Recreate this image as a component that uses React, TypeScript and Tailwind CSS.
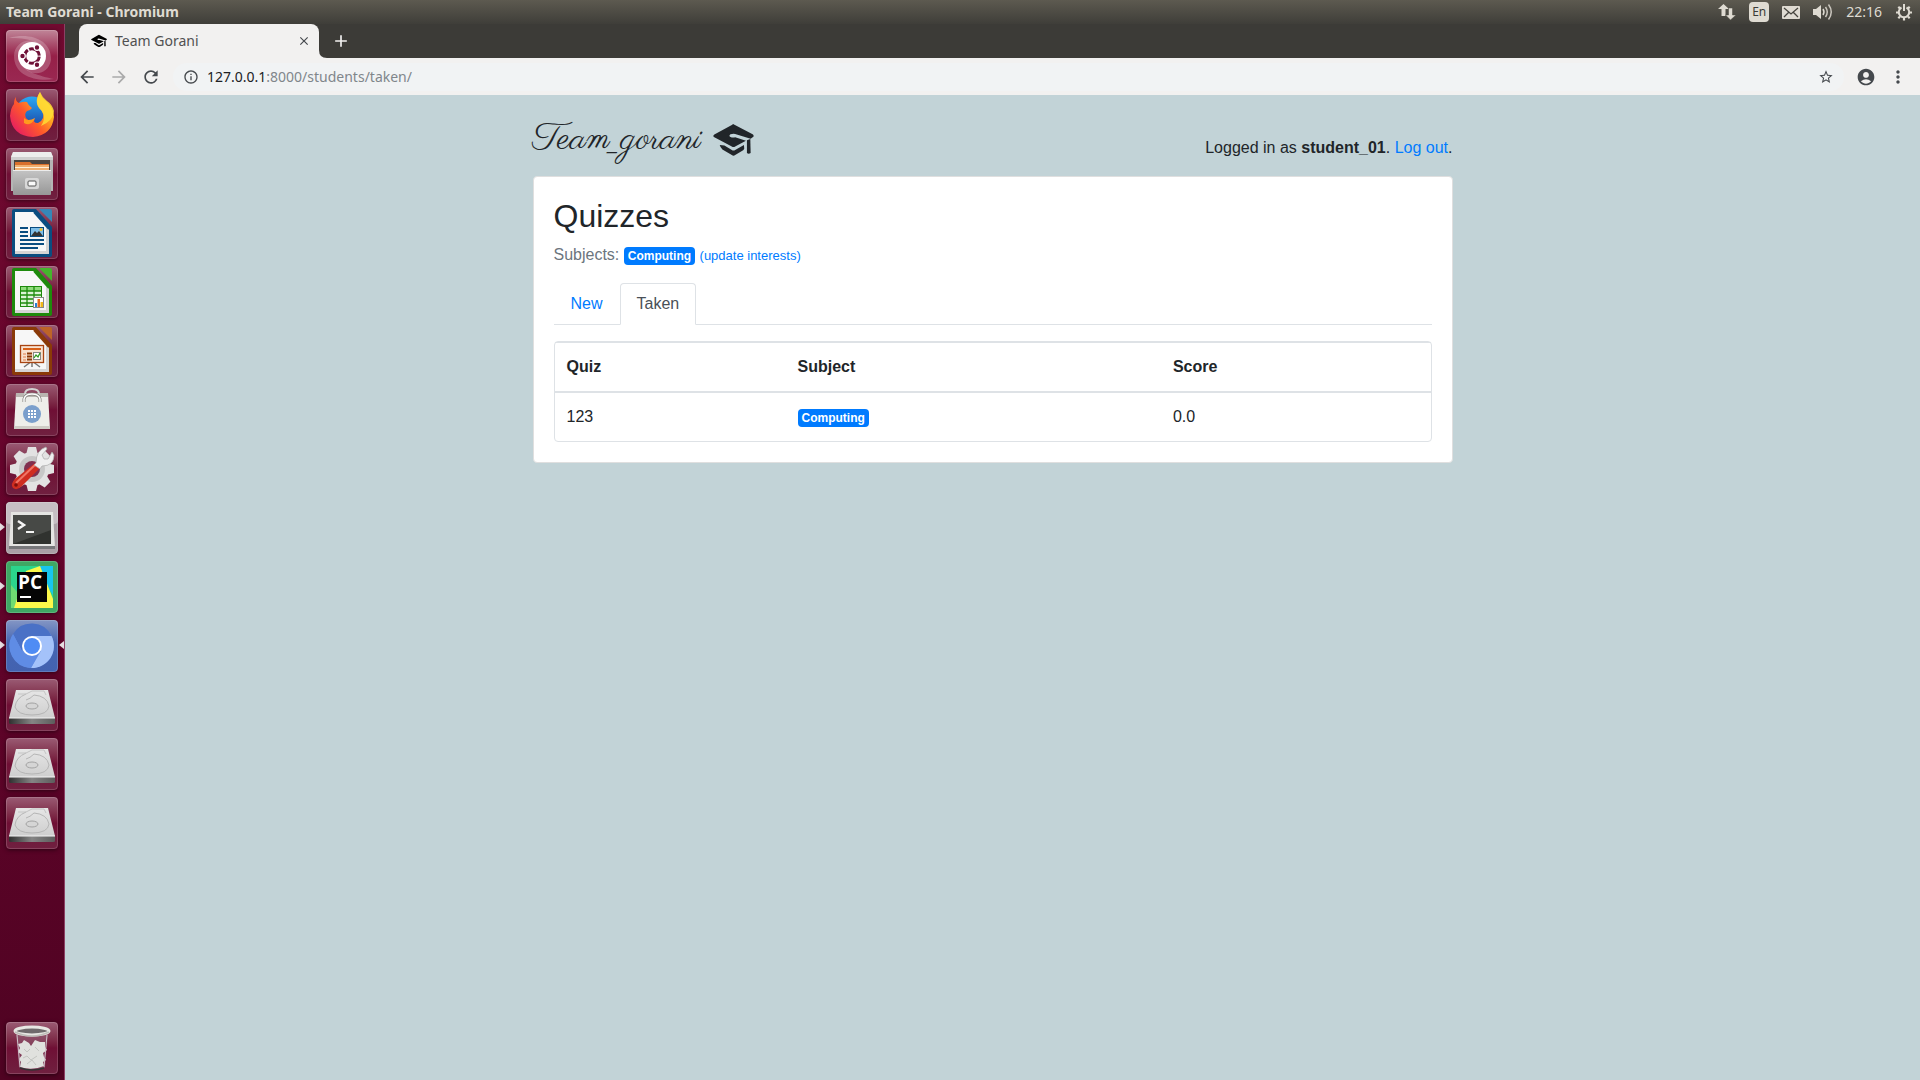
import React from "react";
import {
  MdArrowBack,
  MdArrowForward,
  MdRefresh,
  MdInfoOutline,
  MdStarBorder,
  MdAccountCircle,
  MdMoreVert,
  MdClose,
  MdAdd,
} from "react-icons/md";

function GraduationCap({ className }: { className: string }) {
  return (
    <svg viewBox="0 0 122 94" className={className} fill="currentColor" aria-hidden="true">
      <path d="M61 0 L118 30 Q124 35 118 39 L112 43 L66 29 Q60 27 52 30 Q46 34 52 38 Q58 41 66 39 L98 49 L66 66 Q61 69 56 66 L4 39 Q-2 35 4 31 L56 2 Q61 -1 61 0Z" />
      <path d="M101 48 L111 44 L112 86 Q106 90 101 86Z" />
      <path d="M20 62 L34 63 L56 77 Q61 80 66 77 L92 62 L93 72 Q92 77 86 80 L66 92 Q61 95 56 92 L28 75 Q22 70 20 62Z" />
    </svg>
  );
}

function UbuntuIcon() {
  return (
    <>
      <defs>
        <linearGradient id="dash" x1="0" y1="0" x2="0" y2="1">
          <stop offset="0" stopColor="#c08598" />
          <stop offset="0.5" stopColor="#962048" />
          <stop offset="1" stopColor="#9a2852" />
        </linearGradient>
      </defs>
      <rect width="52" height="52" rx="4" fill="url(#dash)" />
      <path d="M3 8 C24 2 46 10 45 30 C42 48 20 46 16 34 C20 42 38 42 39 26 C38 10 20 8 3 8Z" fill="#fff" opacity="0.22" />
      <path d="M48 49 C30 52 8 46 8 26 C8 12 24 6 34 14 C20 10 12 18 13 28 C16 42 34 46 48 49Z" fill="#fff" opacity="0.2" />
      <circle cx="26" cy="26" r="14" fill="#fff" />
      <circle cx="26" cy="26" r="7.3" fill="none" stroke="#6f1238" strokeWidth="3" strokeDasharray="13.8 1.5" strokeDashoffset="-0.7" />
      <g fill="#6f1238" stroke="#fff" strokeWidth="1.2">
        <circle cx="16.5" cy="26" r="2.8" />
        <circle cx="31" cy="17.5" r="2.8" />
        <circle cx="31" cy="34.8" r="2.8" />
      </g>
    </>
  );
}

function FirefoxIcon() {
  return (
    <>
      <defs>
        <linearGradient id="fox" x1="1" y1="0" x2="0.1" y2="0.8">
          <stop offset="0" stopColor="#fff44f" />
          <stop offset="0.35" stopColor="#ffb020" />
          <stop offset="0.65" stopColor="#ff5a2a" />
          <stop offset="1" stopColor="#e8235c" />
        </linearGradient>
        <linearGradient id="globe" x1="0" y1="0" x2="0" y2="1">
          <stop offset="0" stopColor="#29a9f5" />
          <stop offset="1" stopColor="#1b3fa0" />
        </linearGradient>
      </defs>
      <circle cx="26" cy="24" r="16.5" fill="url(#globe)" />
      <path d="M10 8 Q9 12 13 14 Q18 12 21 13 Q22 16 26 19 Q24 22 21 22 Q18 25 20 29 Q24 34 29 29 Q26 34 32 34 Q40 30 36 22 Q27 14 34 3 Q35 9 41 13 Q48 20 48 28 Q46 46 27 48 Q6 47 4 27 Q5 18 8 15 Q8 10 10 8Z" fill="url(#fox)" />
      <path d="M34 3 Q27 14 35 21 Q41 28 35 37 Q47 32 48 22 Q46 15 41 12 Q36 8 34 3Z" fill="#ffdc35" opacity="0.85" />
      <path d="M18 29 Q22 33 29 29 Q25 38 18 34Z" fill="#ff9a1e" />
    </>
  );
}

function FilesIcon() {
  return (
    <>
      <defs>
        <linearGradient id="drawer" x1="0" y1="0" x2="0" y2="1">
          <stop offset="0" stopColor="#c4c4c4" />
          <stop offset="1" stopColor="#979797" />
        </linearGradient>
      </defs>
      <path d="M7 4 H45 L47 9 V43 H5 V9Z" fill="#b5b5b5" />
      <path d="M7 4 H45 L47 9 H5Z" fill="#ededed" />
      <path d="M5 9 H47 V12 H5Z" fill="#cfcfcf" />
      <rect x="8" y="12" width="36" height="12" fill="#4a4540" />
      <path d="M9 14 H24 L26 16 H43 V24 H9Z" fill="#d9702c" />
      <path d="M9 17 H43 V24 H9Z" fill="#f0b070" />
      <path d="M9 19.5 H43" stroke="#fff0d8" strokeWidth="1" />
      <rect x="7" y="22" width="38" height="25" rx="1" fill="url(#drawer)" />
      <path d="M7 22.5 H45" stroke="#ececec" />
      <rect x="19" y="30" width="14" height="11" rx="2" fill="#d8d8d8" />
      <rect x="22" y="33" width="8" height="5" rx="1" fill="#fafafa" stroke="#555" />
    </>
  );
}

function DocumentShape({ dark, light }: { dark: string; light: string }) {
  return (
    <>
      <path d="M8 2 H30 L46 20 V48 Q46 50 44 50 H8 Q6 50 6 48 V4 Q6 2 8 2Z" fill={dark} />
      <path d="M33 2 H44 Q46 2 46 4 V15Z" fill={light} />
      <path d="M9 5 H28 L43 22 V47 H9Z" fill="#f7f7f7" />
      <path d="M9 44 H43 V47 H9Z M40 20 L43 22 V47 H40Z" fill="#d5d5d5" />
      <path d="M28 5 L43 22" stroke={dark} strokeWidth="2" />
    </>
  );
}

function WriterIcon() {
  return (
    <>
      <DocumentShape dark="#0a4d80" light="#3587b8" />
      <path d="M14 21 H22 M14 25 H22 M14 29 H22 M14 33 H38 M14 37 H38 M14 41 H32" stroke="#0a4d80" strokeWidth="2" />
      <rect x="24.5" y="20.5" width="13" height="9" fill="#80bfe8" stroke="#0a4d80" />
      <path d="M25 29 L29 24 L31 26 L33 24 L37 29Z" fill="#333" />
      <circle cx="35" cy="22.5" r="1.5" fill="#f0c030" />
    </>
  );
}

function CalcIcon() {
  return (
    <>
      <DocumentShape dark="#1e8a0c" light="#45b52c" />
      <rect x="14.5" y="20.5" width="21" height="20" fill="#ddf4d6" stroke="#1e8a0c" />
      <rect x="15" y="21" width="20" height="4" fill="#90dc7c" />
      <path d="M14 25 H36 M14 29 H36 M14 33 H36 M14 37 H36 M21 20 V41 M28 20 V41" stroke="#1e8a0c" strokeWidth="1.3" />
      <rect x="27.5" y="31.5" width="10" height="10" fill="#fff" stroke="#888" />
      <path d="M29 41 V37 H31 V41Z" fill="#2a80d0" />
      <path d="M31.5 41 V33 H34 V41Z" fill="#e86818" />
      <path d="M34.5 41 V36 H37 V41Z" fill="#f0b818" />
    </>
  );
}

function ImpressIcon() {
  return (
    <>
      <DocumentShape dark="#8a3a08" light="#bd6428" />
      <path d="M26 36 L18 42 M26 36 L34 42 M26 36 V42" stroke="#777" strokeWidth="1.5" />
      <rect x="14.5" y="20.5" width="23" height="17" fill="#f8e2d0" stroke="#a84412" strokeWidth="1.3" />
      <path d="M17 24 H35" stroke="#d86018" strokeWidth="2" />
      <path d="M17 29 H20 M17 32 H20 M17 35 H20" stroke="#e8a078" strokeWidth="1.5" />
      <path d="M21 28.5 H26 M21 31.5 H26 M21 34.5 H26" stroke="#8a3a08" strokeWidth="1.8" />
      <rect x="27.5" y="27.5" width="7" height="7" fill="#fff" stroke="#888" />
      <path d="M28 33 L30 30 L32 32 L34 28" stroke="#2d9a20" strokeWidth="1.3" fill="none" />
    </>
  );
}

function SoftwareIcon() {
  return (
    <>
      <path d="M10 9 H42 L44 45 H8Z" fill="#eeeeea" />
      <path d="M10 9 H42 V13 H10Z" fill="#b9b5b0" />
      <path d="M19 13 V10 Q19 5 26 5 Q33 5 33 10 V13" stroke="#d2d2d2" strokeWidth="2" fill="none" />
      <path d="M18 18 V15 Q19 10 26 10 Q33 10 34 15 V18" stroke="#85827d" strokeWidth="3" fill="none" />
      <path d="M18 18 V15 Q19 10 26 10 Q33 10 34 15 V18" stroke="#fff" strokeWidth="1.5" fill="none" />
      <path d="M8 42 H44 V45 H8Z" fill="#cfccc6" />
      <circle cx="26" cy="30" r="9" fill="#7b9fcc" />
      <path d="M22 27 H24 M25 27 H27 M28 27 H30 M22 30 H24 M25 30 H27 M28 30 H30 M22 33 H24 M25 33 H27 M28 33 H30" stroke="#fff" strokeWidth="2" />
    </>
  );
}

const gearTeeth = [0, 45, 90, 135, 180, 225, 270, 315];

function SettingsIcon() {
  return (
    <>
      <g fill="#e2e2e2">
        {gearTeeth.map((a) => (
          <path key={a} d="M20 12 L22 4 H30 L32 12Z" transform={`rotate(${a} 26 26)`} />
        ))}
        <circle cx="26" cy="26" r="17" />
      </g>
      <circle cx="26" cy="26" r="13" fill="#c7c7c7" />
      <circle cx="26" cy="26" r="8" fill="#80304f" />
      <path d="M29 20 L35 24 L16 43 Q11 48 7 45 Q4 41 9 36Z" fill="#cf2d20" />
      <path d="M29 22 L10 40" stroke="#f07565" strokeWidth="2" />
      <circle cx="10" cy="42" r="1.8" fill="#7d100b" />
      <path d="M30 20 Q30 7 40 4 L41 6 L36 12 L38 16 L42 16 L46 9 L48 12 Q48 23 36 23 L34 26 L28 22Z" fill="#efefef" stroke="#aaa" strokeWidth="0.7" />
    </>
  );
}

function TerminalIcon() {
  return (
    <>
      <rect width="52" height="52" rx="4" fill="#aaa0a6" />
      <rect width="52" height="22" rx="4" fill="#c6bec3" />
      <path d="M5 10 H47 L49 46 H3Z" fill="#e5e5e3" />
      <path d="M3 44 H49 V47 H3Z" fill="#77777a" />
      <rect x="7" y="13" width="38" height="29" fill="#30322f" />
      <path d="M7 13 H45 V28 L7 42Z" fill="#474946" />
      <path d="M12 19 L18 23 L12 27" fill="none" stroke="#f4f4f4" strokeWidth="2.5" />
      <path d="M20 30 H28" stroke="#f4f4f4" strokeWidth="2" />
    </>
  );
}

function PyCharmIcon() {
  return (
    <>
      <rect width="52" height="52" rx="4" fill="#3fa864" />
      <rect x="5" y="5" width="42" height="42" fill="#2bd58c" />
      <path d="M5 24 V47 H25Z" fill="#6fdc72" />
      <path d="M33 5 H47 V34 L38 20Z" fill="#18c5ee" />
      <path d="M20 10 L34 5 L40 20 L47 38 V47 L8 47Z" fill="#fcf84a" />
      <rect x="11" y="11" width="30" height="30" fill="#050505" />
      <text x="12" y="28" fontSize="19" fontWeight="700" fill="#fff" fontFamily='"Open Sans", sans-serif'>
        PC
      </text>
      <path d="M14 36 H25" stroke="#fff" strokeWidth="2" />
    </>
  );
}

function ChromiumIcon() {
  return (
    <>
      <defs>
        <linearGradient id="chromiumTile" x1="0" y1="0" x2="0" y2="1">
          <stop offset="0" stopColor="#8496c4" />
          <stop offset="0.45" stopColor="#4565b2" />
          <stop offset="1" stopColor="#4362b0" />
        </linearGradient>
      </defs>
      <rect width="52" height="52" rx="4" fill="url(#chromiumTile)" />
      <circle cx="26" cy="26" r="22" fill="#6991e2" />
      <path d="M7 14 A22 22 0 0 1 45.5 16 H26 L16 31Z" fill="#4a71c6" />
      <path d="M26 16 H45.5 A22 22 0 0 1 25 48 L35 31Z" fill="#a4c2fa" />
      <path d="M7 14 A22 22 0 0 0 25 48 L32 35 L16 31Z" fill="#5f8ce5" />
      <circle cx="26" cy="26" r="10" fill="#fff" />
      <circle cx="26" cy="26" r="8" fill="#4f8cf4" />
    </>
  );
}

function DriveIcon() {
  return (
    <>
      <defs>
        <linearGradient id="disk" x1="0" y1="0" x2="0" y2="1">
          <stop offset="0" stopColor="#e6e6e6" />
          <stop offset="1" stopColor="#cecece" />
        </linearGradient>
        <linearGradient id="diskEdge" x1="0" y1="0" x2="1" y2="0">
          <stop offset="0" stopColor="#303030" />
          <stop offset="0.5" stopColor="#858585" />
          <stop offset="1" stopColor="#5c5c5c" />
        </linearGradient>
      </defs>
      <path d="M10 11 H42 L49 39 H3Z" fill="url(#disk)" />
      <path d="M3 39 H49 V44 Q49 45 47 45 H5 Q3 45 3 44Z" fill="url(#diskEdge)" />
      <path d="M3 39 H49" stroke="#f5f5f5" />
      <path d="M20 15 Q10 19 9 28 Q12 36 26 36 Q42 36 43 27 Q41 17 28 16 Q24 20 20 21" fill="none" stroke="#b5b5b5" />
      <path d="M12 15 H20 L26 12 H38 L40 16" fill="none" stroke="#c4c4c4" />
      <ellipse cx="26" cy="27" rx="6" ry="3" fill="#d5d5d5" stroke="#a2a2a2" />
    </>
  );
}

function TrashIcon() {
  return (
    <>
      <path d="M10 11 L13 46 Q26 50 39 46 L42 11Z" fill="#a590a0" opacity="0.3" />
      <path d="M12 22 L16 21 L18 18 L23 21 L25 24 L29 18 L34 20 L39 20 L39 25 L41 28 L37 31 L38 35 L40 38 L37 40 L38 44 Q26 49 14 45 L15 40 L13 37 L16 33 L12 30 L14 26Z" fill="#e0e1de" />
      <path d="M18 27 L21 30 L24 27 M29 25 L33 29 M17 36 L21 34 L25 38 L31 34 M21 42 L26 38 L30 43" stroke="#c3c5c1" fill="none" />
      <path d="M11 13 L14 45 M41 13 L38 45" stroke="#d0c2ca" strokeWidth="1" />
      <path d="M14 46 Q26 50 38 46" stroke="#333" fill="none" strokeWidth="1.5" />
      <ellipse cx="26" cy="9" rx="17" ry="4" fill="#6f6a6c" stroke="#e7e7e3" strokeWidth="3" />
      <path d="M9 10 Q26 18 43 10" stroke="#bdbdb8" strokeWidth="1.5" fill="none" />
    </>
  );
}

type LauncherEntry = { label: string; icon: React.ReactNode; running?: boolean; focused?: boolean };

const launcher: LauncherEntry[] = [
  { label: "Search your computer", icon: <UbuntuIcon /> },
  { label: "Firefox", icon: <FirefoxIcon /> },
  { label: "Files", icon: <FilesIcon /> },
  { label: "Writer", icon: <WriterIcon /> },
  { label: "Calc", icon: <CalcIcon /> },
  { label: "Impress", icon: <ImpressIcon /> },
  { label: "Software", icon: <SoftwareIcon /> },
  { label: "System Settings", icon: <SettingsIcon /> },
  { label: "Terminal", icon: <TerminalIcon />, running: true },
  { label: "PyCharm", icon: <PyCharmIcon />, running: true },
  { label: "Chromium", icon: <ChromiumIcon />, running: true, focused: true },
  { label: "Volume 1", icon: <DriveIcon /> },
  { label: "Volume 2", icon: <DriveIcon /> },
  { label: "Volume 3", icon: <DriveIcon /> },
];

function LauncherButton({ label, icon, running, focused }: LauncherEntry) {
  return (
    <div className="relative flex w-full justify-center">
      {running && (
        <svg viewBox="0 0 5 8" className="absolute top-[21px] left-0 h-2 w-[5px]" fill="#e6dde1" aria-hidden="true">
          <path d="M0 0 L5 4 L0 8Z" />
        </svg>
      )}
      <button
        type="button"
        aria-label={label}
        className="relative size-[52px] overflow-hidden rounded bg-linear-to-b from-[#9a5b74] via-[#6f0f35] via-50% to-[#702040] shadow-[0_1px_4px_rgba(0,0,0,0.5)]"
      >
        <svg viewBox="0 0 52 52" className="block size-full" aria-hidden="true">
          {icon}
          <rect x="0.5" y="0.5" width="51" height="51" rx="3.5" fill="none" stroke="#fff" strokeOpacity="0.16" />
        </svg>
      </button>
      {focused && (
        <svg viewBox="0 0 5 8" className="absolute top-[21px] right-0 h-2 w-[5px]" fill="#e6dde1" aria-hidden="true">
          <path d="M5 0 L0 4 L5 8Z" />
        </svg>
      )}
    </div>
  );
}

function Launcher() {
  return (
    <nav
      aria-label="Launcher"
      className="flex w-[65px] shrink-0 flex-col justify-between border-r border-[#8c4064] bg-linear-to-b from-[#710a30] via-[#64042b] via-50% to-[#4f0322] pt-1.5 pb-1.5"
    >
      <div className="flex flex-col gap-[7px]">
        {launcher.map((e) => (
          <LauncherButton key={e.label} {...e} />
        ))}
      </div>
      <LauncherButton label="Trash" icon={<TrashIcon />} />
    </nav>
  );
}

function SystemBar() {
  return (
    <header className="flex h-6 shrink-0 items-center justify-between bg-linear-to-b from-[#5d5a50] to-[#3f3e39] pr-[7px] pl-1.5 text-[#dfdbd2]">
      <span className="text-sm leading-6 font-bold">Team Gorani - Chromium</span>
      <div className="flex items-center gap-[13px]">
        <svg viewBox="0 0 18 16" className="h-4 w-[18px]" fill="currentColor" aria-hidden="true">
          <path d="M5.500 0 L11 5 H7.500 V12 H3.500 V5 H0Z" />
          <path d="M12.500 16 L7.500 11 H10.500 V4 H14.500 V11 H18Z" stroke="#4b4941" strokeWidth="0.5" />
        </svg>
        <span className="flex h-5 w-5 items-center justify-center rounded-sm bg-[#dfdbd2] text-xs leading-5 text-[#3c3b37]">En</span>
        <svg viewBox="0 0 18 13" className="h-[13px] w-[18px]" aria-hidden="true">
          <rect width="18" height="13" rx="1" fill="#dfdbd2" />
          <path d="M2 2 L9 8 L16 2 M2 11 L6.500 6.500 M16 11 L11.500 6.500" stroke="#46443e" strokeWidth="1.3" fill="none" />
        </svg>
        <svg viewBox="0 0 20 18" className="h-[18px] w-5" fill="none" stroke="currentColor" strokeWidth="1.5" aria-hidden="true">
          <path d="M0 6 H3 L8 2 V16 L3 12 H0Z" fill="currentColor" stroke="none" />
          <path d="M10 6 Q12 9 10 12" />
          <path d="M12.500 4 Q16 9 12.500 14" opacity="0.85" />
          <path d="M15.500 1.500 Q21 9 15.500 16.500" opacity="0.85" />
        </svg>
        <time className="text-sm leading-6">22:16</time>
        <svg viewBox="0 0 18 18" className="size-[18px]" fill="none" stroke="currentColor" aria-hidden="true">
          <path d="M6.500 4.500 A5.200 5.200 0 1 0 11.500 4.500" strokeWidth="2" />
          <path d="M9 1 V8" strokeWidth="2" />
          <path d="M1 9.500 H4 M14 9.500 H17 M9 14 V17.500 M3.300 3.800 L5 5.500 M14.700 3.800 L13 5.500 M3.300 15.200 L5 13.500 M14.700 15.200 L13 13.500" strokeWidth="2.2" />
        </svg>
      </div>
    </header>
  );
}

function Flare({ className }: { className: string }) {
  return (
    <svg viewBox="0 0 8 8" className={className} fill="#f2f1f0" aria-hidden="true">
      <path d="M8 0 V8 H0 Q8 8 8 0Z" />
    </svg>
  );
}

function BrowserChrome() {
  return (
    <div className="shrink-0">
      <div className="flex h-[34px] items-end bg-[#3c3b37] pl-[14px]">
        <div className="relative flex h-[34px] w-60 items-center rounded-t-lg bg-[#f2f1f0] pr-2 pl-3">
          <Flare className="absolute bottom-0 -left-2 size-2" />
          <Flare className="absolute -right-2 bottom-0 size-2 -scale-x-100" />
          <GraduationCap className="h-[14px] w-4 text-black" />
          <span className="ml-2 flex-1 text-sm text-[#505050]">Team Gorani</span>
          <button type="button" aria-label="Close tab" className="text-[#45494d]">
            <MdClose size={14} />
          </button>
        </div>
        <button type="button" aria-label="New tab" className="ml-3 flex h-[34px] items-center text-[#f2f1f0]">
          <MdAdd size={20} />
        </button>
      </div>
      <div className="flex h-[37px] items-center bg-[#f2f1f0] pr-3 pl-3 text-[#45494d]">
        <button type="button" aria-label="Back">
          <MdArrowBack size={20} />
        </button>
        <button type="button" aria-label="Forward" className="ml-3 text-[#aaa]">
          <MdArrowForward size={20} />
        </button>
        <button type="button" aria-label="Reload" className="ml-3">
          <MdRefresh size={20} />
        </button>
        <div className="ml-3 flex h-7 flex-1 items-center rounded-full bg-[#f1f3f4] pr-2.5 pl-2.5">
          <MdInfoOutline size={16} />
          <a href="#address" className="ml-2 flex-1 text-sm text-[#80868b]">
            <span className="text-[#202124]">127.0.0.1</span>:8000/students/taken/
          </a>
          <button type="button" aria-label="Bookmark this page">
            <MdStarBorder size={16} />
          </button>
        </div>
        <button type="button" aria-label="Profile" className="ml-3">
          <MdAccountCircle size={20} />
        </button>
        <button type="button" aria-label="Menu" className="ml-3">
          <MdMoreVert size={20} />
        </button>
      </div>
    </div>
  );
}

function Badge({ children }: { children: React.ReactNode }) {
  return (
    <span className="inline-block rounded bg-[#007bff] px-1 py-[3px] align-baseline text-xs leading-3 font-bold text-white">
      {children}
    </span>
  );
}

function QuizPage() {
  return (
    <main className='flex-1 bg-[#c2d3d7] px-4 font-["Liberation_Sans",Arial,sans-serif] text-base text-[#212529]'>
      <div className="mx-auto max-w-[920px]">
        <div className="flex items-center justify-between pt-[22px] pb-[14px]">
          <h1 className="flex h-[45px] items-center">
            <a href="#home" className="flex items-center gap-3">
              <span className='font-["Parisienne","Liberation_Serif",serif] text-[36px] leading-[45px]'>Team_gorani</span>
              <GraduationCap className="h-8 w-[41px]" />
            </a>
          </h1>
          <p className="pt-4 leading-6">
            Logged in as <strong>student_01</strong>.{" "}
            <a href="#logout" className="text-[#007bff]">
              Log out
            </a>
            .
          </p>
        </div>
        <section className="rounded border border-[#dfdfdf] bg-white p-5">
          <h2 className="mb-2 text-[32px] leading-[38px]">Quizzes</h2>
          <p className="mb-[15px] leading-6 text-[#6c757d]">
            Subjects: <Badge>Computing</Badge>{" "}
            <a href="#interests" className="text-[13px] text-[#007bff]">
              (update interests)
            </a>
          </p>
          <ul className="mb-4 flex border-b border-[#dee2e6]">
            <li className="-mb-px">
              <a href="#new" className="block border border-transparent px-4 py-2 text-[#007bff]">
                New
              </a>
            </li>
            <li className="-mb-px">
              <a
                href="#taken"
                aria-current="page"
                className="block rounded-t border border-[#dee2e6] border-b-white bg-white px-4 py-2 text-[#495057]"
              >
                Taken
              </a>
            </li>
          </ul>
          <div className="rounded border border-[#dee2e6]">
            <table className="w-full border-separate border-spacing-0 text-left">
              <thead>
                <tr>
                  <th scope="col" className="border-t border-b-2 border-[#dee2e6] p-3">Quiz</th>
                  <th scope="col" className="border-t border-b-2 border-[#dee2e6] p-3">Subject</th>
                  <th scope="col" className="border-t border-b-2 border-[#dee2e6] p-3">Score</th>
                </tr>
              </thead>
              <tbody>
                <tr>
                  <td className="p-3">123</td>
                  <td className="p-3">
                    <Badge>Computing</Badge>
                  </td>
                  <td className="p-3">0.0</td>
                </tr>
              </tbody>
            </table>
          </div>
        </section>
      </div>
    </main>
  );
}

export default function App() {
  return (
    <div className='flex min-h-screen flex-col font-["Noto_Sans","Open_Sans",sans-serif]'>
      <SystemBar />
      <div className="flex flex-1">
        <Launcher />
        <div className="flex min-w-0 flex-1 flex-col">
          <BrowserChrome />
          <QuizPage />
        </div>
      </div>
    </div>
  );
}
